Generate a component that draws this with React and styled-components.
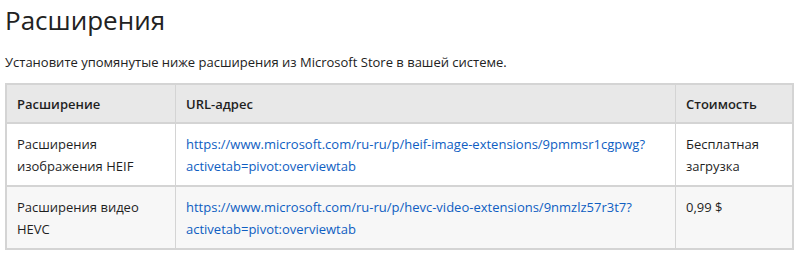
import React from "react";
import styled, { createGlobalStyle } from "styled-components";

const Global = createGlobalStyle`
  body {
    margin: 0;
    background: #fff;
    font-family: "Open Sans", "Noto Sans", sans-serif;
    color: #1f1f1f;
  }
`;

const Page = styled.div`
  padding: 0 6px 0 5px;
`;

const Title = styled.h2`
  margin: 0;
  padding-top: 1px;
  font-size: 26px;
  font-weight: 400;
  line-height: 38px;
  color: #222;
`;

const Intro = styled.p`
  margin: 12px 0 10px;
  font-size: 13px;
  line-height: 22px;
  color: #222;
`;

const Table = styled.table`
  width: 100%;
  table-layout: fixed;
  border-collapse: collapse;
  font-size: 13px;
  line-height: 22px;
  border: 2px solid #d4d4d4;
`;

const HeadCell = styled.th`
  background: #e8e8e8;
  text-align: left;
  font-weight: 600;
  padding: 8px 10px 7px;
  border: 1px solid #d4d4d4;
  border-bottom-width: 2px;
  width: ${(p) => p.$w || "auto"};
`;

const Row = styled.tr`
  background: ${(p) => (p.$alt ? "#f7f7f7" : "#fff")};
`;

const Cell = styled.td`
  vertical-align: top;
  padding: 9px 10px 8px;
  border: 1px solid #d4d4d4;
  border-bottom-width: 2px;
`;

const Link = styled.a`
  color: #0f5ec2;
  text-decoration: none;
  white-space: nowrap;
`;

const rows = [
  {
    name: "Расширения изображения HEIF",
    url: "https://www.microsoft.com/ru-ru/p/heif-image-extensions/9pmmsr1cgpwg?",
    tail: "activetab=pivot:overviewtab",
    cost: "Бесплатная загрузка",
  },
  {
    name: "Расширения видео HEVC",
    url: "https://www.microsoft.com/ru-ru/p/hevc-video-extensions/9nmzlz57r3t7?",
    tail: "activetab=pivot:overviewtab",
    cost: "0,99 $",
  },
];

export default function App() {
  return (
    <>
      <Global />
      <Page>
        <Title>Расширения</Title>
        <Intro>Установите упомянутые ниже расширения из Microsoft Store в вашей системе.</Intro>
        <Table>
          <thead>
            <tr>
              <HeadCell $w="148px">Расширение</HeadCell>
              <HeadCell>URL-адрес</HeadCell>
              <HeadCell $w="96px">Стоимость</HeadCell>
            </tr>
          </thead>
          <tbody>
            {rows.map((r, i) => (
              <Row key={i} $alt={i % 2 === 1}>
                <Cell>{r.name}</Cell>
                <Cell>
                  <Link href="#">
                    {r.url}
                    <br />
                    {r.tail}
                  </Link>
                </Cell>
                <Cell>{r.cost}</Cell>
              </Row>
            ))}
          </tbody>
        </Table>
      </Page>
    </>
  );
}
